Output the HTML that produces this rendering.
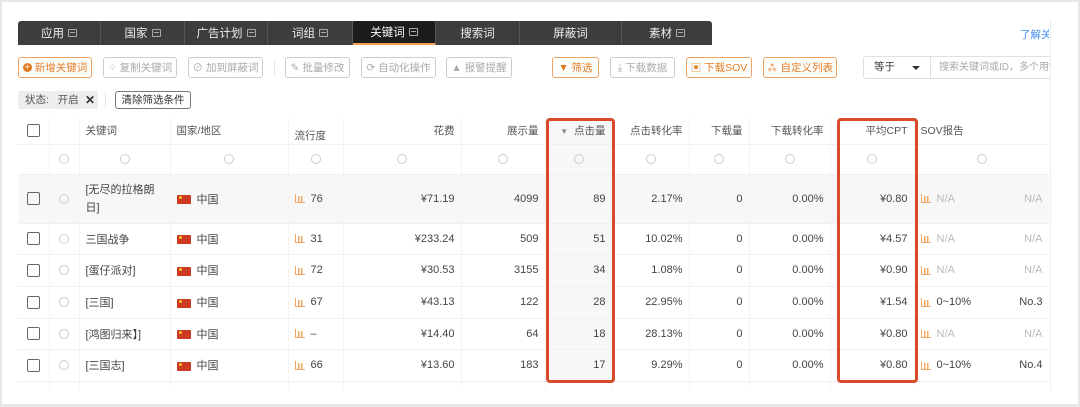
<!DOCTYPE html>
<html><head><meta charset="utf-8"><style>
*{box-sizing:border-box;margin:0;padding:0}
body{width:1080px;height:407px;background:#fff;font-family:"Liberation Sans","Noto Sans CJK SC",sans-serif;font-size:11px;color:#333;position:relative;overflow:hidden}
.frame{position:absolute;inset:0;border:2px solid #e6e6e6;border-bottom-width:3px}
.vline{position:absolute;left:1050px;top:20px;width:1px;height:370px;background:#eee}
.tabs{position:absolute;left:18px;top:21px;height:24px;display:flex;background:#3d3d3d;border-radius:3px 3px 0 0}
.tab{color:#eee;font-size:11.5px;display:flex;align-items:center;justify-content:center;border-right:1px solid #555;height:24px}
.tab.act{background:#1c1c1c;border-bottom:2px solid #f0a050;color:#fff;border-radius:3px 3px 0 0}
.ic{display:inline-block;width:9px;height:8px;border:1px solid #aaa;margin-left:4px;position:relative;border-radius:1px}
.ic:after{content:"";position:absolute;left:1px;right:1px;top:2px;height:1px;background:#aaa}
.btn{position:absolute;top:57px;height:21px;border:1px solid #ccc;border-radius:3px;color:#aaa;font-size:10.5px;display:flex;align-items:center;justify-content:center;gap:3px;background:#fff}
.btn.o{border-color:#eda463;color:#e07b22}
.link{position:absolute;left:1020px;top:27px;width:29px;overflow:hidden;color:#4a8ef0;font-size:10.5px;white-space:nowrap}
.sel{position:absolute;left:863px;top:56px;width:68px;height:23px;border:1px solid #e0e0e0;border-radius:3px 0 0 3px;font-size:10.5px;padding-left:10px;line-height:21px}
.sel:after{content:"";position:absolute;right:10px;top:9px;border:4px solid transparent;border-top:4px solid #333}
.inp{position:absolute;left:930px;top:56px;width:120px;height:23px;border:1px solid #e0e0e0;border-left:none;border-right:none;font-size:10px;color:#aaa;padding-left:9px;line-height:21px;white-space:nowrap;overflow:hidden}
.tag{position:absolute;left:18px;top:91px;width:80px;height:18px;background:#ededed;border-radius:2px;font-size:10.5px;color:#555;line-height:18px;padding-left:7px}
.clr{position:absolute;left:115px;top:91px;width:76px;height:18px;border:1px solid #777;border-radius:3px;font-size:10.5px;color:#333;line-height:16px;text-align:center}
.tw{position:absolute;left:18px;top:117px;width:1031px;height:271px;overflow:hidden}
table{border-collapse:collapse;table-layout:fixed;width:1031px}
td{border-right:1px solid #f4f4f4;border-bottom:1px solid #f0f0f0;padding:0 6px;white-space:nowrap;font-size:11px;color:#444}
tr.h td{height:27px;color:#555;font-size:10.5px}
tr.f td{height:30px;text-align:center}
.r{text-align:right}
.cb{display:inline-block;width:13px;height:13px;border:1.5px solid #666;border-radius:2px;vertical-align:middle}
.rd{display:inline-block;width:10px;height:10px;border:1px solid #ccc;border-radius:50%;vertical-align:middle}
.fl{display:inline-block;width:14px;height:9px;background:#cc3a22;vertical-align:middle;margin-right:6px;position:relative;border-radius:1px}
.fl:before{content:"";position:absolute;left:2px;top:1px;width:3px;height:3px;background:#f2c230;border-radius:50%}
.bar{display:inline-block;width:10px;height:9px;border-left:1.5px solid #f0a860;border-bottom:1px solid #f0a860;vertical-align:middle;margin-right:6px;background:linear-gradient(90deg,transparent 2px,#f0a860 2px,#f0a860 3.5px,transparent 3.5px,transparent 5px,#f0a860 5px,#f0a860 6.5px,transparent 6.5px) bottom/100% 6px no-repeat}
.g{color:#bbb}
.box{position:absolute;border:3px solid #d94a2c;border-radius:4px}
</style></head><body>
<div class="frame"></div>
<div class="vline"></div>
<div class="tabs">
<div class="tab" style="width:83px">应用<span class="ic"></span></div>
<div class="tab" style="width:84px">国家<span class="ic"></span></div>
<div class="tab" style="width:83px">广告计划<span class="ic"></span></div>
<div class="tab" style="width:85px">词组<span class="ic"></span></div>
<div class="tab act" style="width:83px">关键词<span class="ic"></span></div>
<div class="tab" style="width:84px">搜索词</div>
<div class="tab" style="width:102px">屏蔽词</div>
<div class="tab" style="width:90px;border-right:none">素材<span class="ic"></span></div>
</div>
<div class="link">了解关键词</div>
<div class="btn o" style="left:18px;width:74px"><span style="display:inline-block;width:9px;height:9px;border-radius:50%;background:#e07b22;color:#fff;font-size:9px;line-height:9px;text-align:center">+</span>新增关键词</div>
<div class="btn" style="left:103px;width:74px">⁘ 复制关键词</div>
<div class="btn" style="left:188px;width:75px">⊘ 加到屏蔽词</div>
<div style="position:absolute;left:274px;top:60px;width:1px;height:16px;background:#e5e5e5"></div>
<div class="btn" style="left:285px;width:65px">✎ 批量修改</div>
<div class="btn" style="left:361px;width:75px">⟳ 自动化操作</div>
<div class="btn" style="left:446px;width:66px">▲ 报警提醒</div>
<div class="btn o" style="left:552px;width:47px">▼ 筛选</div>
<div class="btn" style="left:610px;width:65px">⤓ 下载数据</div>
<div class="btn o" style="left:686px;width:66px">▣ 下载SOV</div>
<div class="btn o" style="left:763px;width:74px">⁂ 自定义列表</div>
<div class="sel">等于</div>
<div class="inp">搜索关键词或ID，多个用","分隔</div>
<div class="tag">状态:&nbsp;&nbsp;&nbsp;开启 <span style="position:absolute;left:67px;top:0;font-weight:bold;color:#333;font-size:12px">✕</span></div>
<div style="position:absolute;left:105px;top:92px;width:1px;height:16px;background:#e5e5e5"></div>
<div class="clr">清除筛选条件</div>
<div class="tw"><table>
<colgroup><col style="width:31px"><col style="width:30px"><col style="width:91px"><col style="width:118px"><col style="width:55px"><col style="width:118px"><col style="width:84px"><col style="width:67px"><col style="width:77px"><col style="width:60px"><col style="width:81px"><col style="width:84px"><col style="width:135px"></colgroup>
<tr class="h"><td style="text-align:center"><span class="cb"></span></td><td></td><td>关键词</td><td>国家/地区</td><td style="padding-top:10px">流行度</td><td class="r">花费</td><td class="r">展示量</td><td class="r" style="background:#f7f7f7"><span style="font-size:8px;color:#888">▼</span>&nbsp; 点击量</td><td class="r">点击转化率</td><td class="r">下载量</td><td class="r">下载转化率</td><td class="r">平均CPT</td><td>SOV报告</td></tr>
<tr class="f"><td></td><td><span class="rd"></span></td><td><span class="rd"></span></td><td><span class="rd"></span></td><td><span class="rd"></span></td><td><span class="rd"></span></td><td><span class="rd"></span></td><td style="background:#f7f7f7"><span class="rd"></span></td><td><span class="rd"></span></td><td><span class="rd"></span></td><td><span class="rd"></span></td><td><span class="rd"></span></td><td><span class="rd"></span></td></tr>
<tr style="background:#f7f7f7"><td style="height:49px;text-align:center"><span class="cb"></span></td><td style="text-align:center"><span class="rd"></span></td><td style="white-space:normal;line-height:18px">[无尽的拉格朗日]</td><td><span class="fl"></span>中国</td><td><span class="bar"></span>76</td><td class="r">¥71.19</td><td class="r">4099</td><td class="r">89</td><td class="r">2.17%</td><td class="r">0</td><td class="r">0.00%</td><td class="r">¥0.80</td><td><span class="bar"></span><span class="g">N/A</span><span class="g" style="float:right">N/A</span></td></tr>
<tr><td style="height:31px;text-align:center"><span class="cb"></span></td><td style="text-align:center"><span class="rd"></span></td><td>三国战争</td><td><span class="fl"></span>中国</td><td><span class="bar"></span>31</td><td class="r">¥233.24</td><td class="r">509</td><td class="r" style="background:#f7f7f7">51</td><td class="r">10.02%</td><td class="r">0</td><td class="r">0.00%</td><td class="r">¥4.57</td><td><span class="bar"></span><span class="g">N/A</span><span class="g" style="float:right">N/A</span></td></tr>
<tr><td style="height:32px;text-align:center"><span class="cb"></span></td><td style="text-align:center"><span class="rd"></span></td><td>[蛋仔派对]</td><td><span class="fl"></span>中国</td><td><span class="bar"></span>72</td><td class="r">¥30.53</td><td class="r">3155</td><td class="r" style="background:#f7f7f7">34</td><td class="r">1.08%</td><td class="r">0</td><td class="r">0.00%</td><td class="r">¥0.90</td><td><span class="bar"></span><span class="g">N/A</span><span class="g" style="float:right">N/A</span></td></tr>
<tr><td style="height:32px;text-align:center"><span class="cb"></span></td><td style="text-align:center"><span class="rd"></span></td><td>[三国]</td><td><span class="fl"></span>中国</td><td><span class="bar"></span>67</td><td class="r">¥43.13</td><td class="r">122</td><td class="r" style="background:#f7f7f7">28</td><td class="r">22.95%</td><td class="r">0</td><td class="r">0.00%</td><td class="r">¥1.54</td><td><span class="bar"></span>0~10%<span style="float:right">No.3</span></td></tr>
<tr><td style="height:31px;text-align:center"><span class="cb"></span></td><td style="text-align:center"><span class="rd"></span></td><td>[鸿图归来】]</td><td><span class="fl"></span>中国</td><td><span class="bar"></span>–</td><td class="r">¥14.40</td><td class="r">64</td><td class="r" style="background:#f7f7f7">18</td><td class="r">28.13%</td><td class="r">0</td><td class="r">0.00%</td><td class="r">¥0.80</td><td><span class="bar"></span><span class="g">N/A</span><span class="g" style="float:right">N/A</span></td></tr>
<tr><td style="height:32px;text-align:center"><span class="cb"></span></td><td style="text-align:center"><span class="rd"></span></td><td>[三国志]</td><td><span class="fl"></span>中国</td><td><span class="bar"></span>66</td><td class="r">¥13.60</td><td class="r">183</td><td class="r" style="background:#f7f7f7">17</td><td class="r">9.29%</td><td class="r">0</td><td class="r">0.00%</td><td class="r">¥0.80</td><td><span class="bar"></span>0~10%<span style="float:right">No.4</span></td></tr>
<tr><td style="height:20px"></td><td></td><td></td><td></td><td></td><td></td><td></td><td></td><td></td><td></td><td></td><td></td><td></td></tr>
</table></div>
<div class="box" style="left:546px;top:118px;width:69px;height:265px"></div>
<div class="box" style="left:837px;top:118px;width:81px;height:265px"></div>
</body></html>
